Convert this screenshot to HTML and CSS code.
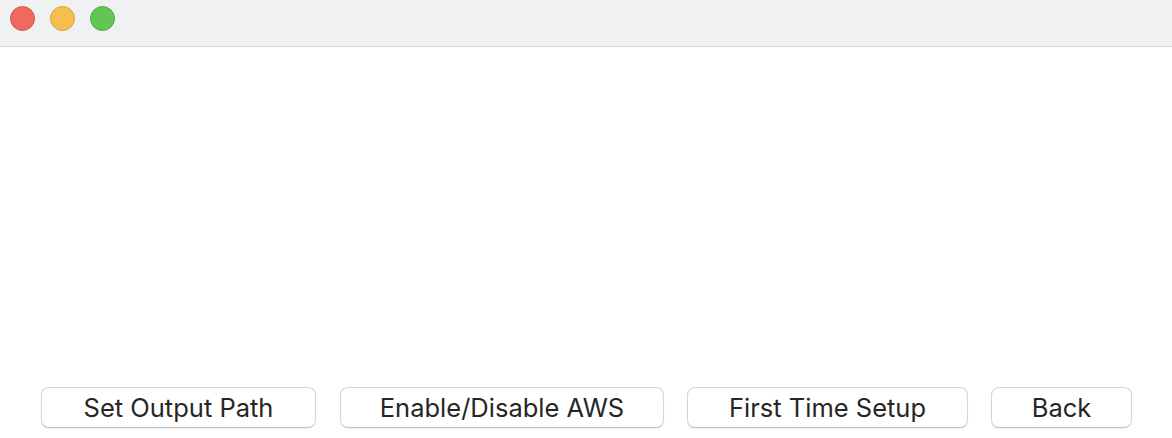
FILE: index.html
```html
<!DOCTYPE html>
<html>
<head>
<meta charset="utf-8">
<link rel="stylesheet" href="styles.css">
</head>
<body>
<div class="window">
  <div class="titlebar">
    <span class="light light-close"></span>
    <span class="light light-min"></span>
    <span class="light light-max"></span>
  </div>
  <div class="content"></div>
  <div class="actions">
    <button class="btn btn-output">Set Output Path</button>
    <button class="btn btn-aws">Enable/Disable AWS</button>
    <button class="btn btn-setup">First Time Setup</button>
    <button class="btn btn-back">Back</button>
  </div>
</div>
</body>
</html>
```
FILE: styles.css
```css
* { box-sizing: border-box; }
html, body { margin: 0; padding: 0; background: #ffffff; }
body {
  width: 1172px;
  height: 438px;
  overflow: hidden;
  font-family: Inter, "Liberation Sans", sans-serif;
}
.window {
  display: flex;
  flex-direction: column;
  height: 438px;
}
.titlebar {
  height: 47px;
  flex: none;
  background: #f0f1f2;
  border-bottom: 1px solid #dadada;
  display: flex;
  align-items: flex-start;
  padding: 6px 0 0 10px;
  gap: 15px;
}
.light {
  width: 25px;
  height: 25px;
  border-radius: 50%;
  display: block;
}
.light-close { background: #ee6a5e; border: 1px solid #d5544a; }
.light-min { background: #f5bf4f; border: 1px solid #d9a23f; }
.light-max { background: #62c554; border: 1px solid #4fab3f; }
.content { flex: 1; }
.actions {
  flex: none;
  display: flex;
  padding: 0 0 10px 41px;
  gap: 23px;
}
.btn {
  height: 41px;
  background: #ffffff;
  border: 1px solid #d6d6d6;
  border-bottom-color: #c4c4c4;
  border-radius: 8px;
  box-shadow: 0 1px 1px rgba(0,0,0,0.08);
  font-family: inherit;
  font-size: 25.5px;
  line-height: 1;
  color: #262626;
  padding: 0;
  margin: 0;
}
.btn-output { width: 275px; margin-right: 1px; }
.btn-aws { width: 324px; }
.btn-setup { width: 281px; }
.btn-back { width: 141px; }
```
